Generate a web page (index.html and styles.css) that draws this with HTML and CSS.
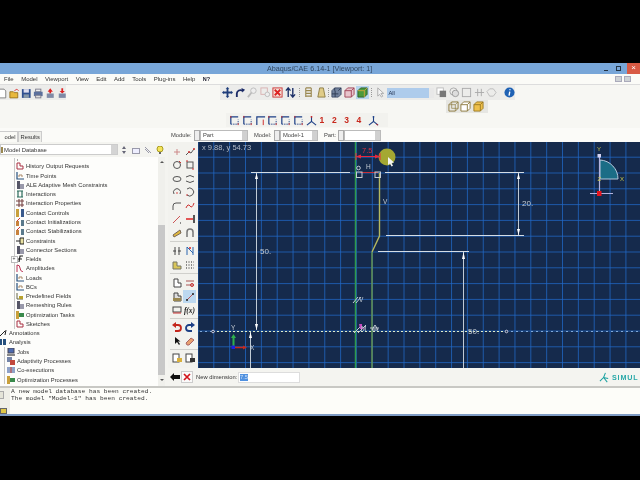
FILE: index.html
```html
<!DOCTYPE html>
<html lang="en">
<head>
<meta charset="utf-8">
<title>Abaqus/CAE</title>
<link rel="stylesheet" href="styles.css">
</head>
<body>
<div class="app">
  <header class="titlebar">
    <span class="title">Abaqus/CAE 6.14-1 [Viewport: 1]</span>
    <div class="winctl">
      <span class="wmin"></span><span class="wmax"></span><span class="wclose">×</span>
    </div>
  </header>
  <nav class="menubar">
    <span>File</span><span>Model</span><span>Viewport</span><span>View</span><span>Edit</span><span>Add</span><span>Tools</span><span>Plug-ins</span><span>Help</span><b>N?</b>
    <div class="mdi"><i></i><i></i></div>
  </nav>
  <section class="toolrows">
    <div class="tools-left">
      <div class="tl-inner">
      <svg class="ic" viewBox="0 0 12 12"><path d="M2 1h6l2 2v8H2z" fill="#fff" stroke="#777"/></svg>
      <svg class="ic" viewBox="0 0 12 12"><path d="M1 4h4l1 1h4v6H1z" fill="#e8b83c" stroke="#96701c"/><path d="M6 3l3-2 2 2" fill="none" stroke="#d33"/></svg>
      <svg class="ic" viewBox="0 0 12 12"><rect x="1" y="1" width="10" height="10" fill="#2f4f8f"/><rect x="3" y="1" width="6" height="4" fill="#dde"/><rect x="3" y="7" width="6" height="4" fill="#89a"/></svg>
      <svg class="ic" viewBox="0 0 12 12"><rect x="3" y="1" width="6" height="3" fill="#eee" stroke="#778"/><rect x="1" y="4" width="10" height="5" fill="#5a6f9c"/><rect x="3" y="8" width="6" height="3" fill="#ddd" stroke="#778"/></svg>
      <svg class="ic" viewBox="0 0 12 12"><path d="M6 0l3 4H7v2H5V4H3z" fill="#d22"/><rect x="2" y="6" width="8" height="5" fill="#7f8aa6"/></svg>
      <svg class="ic" viewBox="0 0 12 12"><path d="M6 6l3-3H7V0H5v3H3z" fill="#d22"/><rect x="2" y="6" width="8" height="5" fill="#7f8aa6"/></svg>
      </div>
    </div>
    <div class="tools-center">
      <div class="tb tb1">
        <svg class="ic" viewBox="0 0 12 12"><path d="M6 0l2 2H7v3h3V4l2 2-2 2V7H7v3h1l-2 2-2-2h1V7H2v1L0 6l2-2v1h3V2H4z" fill="#1f3d7a"/></svg>
        <svg class="ic" viewBox="0 0 12 12"><path d="M2 11V7a4 4 0 0 1 6-3" fill="none" stroke="#1b2a66" stroke-width="2"/><path d="M7 1l4 2-3 3z" fill="#1b2a66"/></svg>
        <svg class="ic" viewBox="0 0 12 12"><circle cx="7" cy="4" r="3" fill="#eee" stroke="#bbb"/><path d="M5 6l-4 5" stroke="#bbb" stroke-width="2"/></svg>
        <svg class="ic" viewBox="0 0 12 12"><rect x="1" y="1" width="7" height="7" fill="none" stroke="#d9b0b0"/><circle cx="8" cy="8" r="2.5" fill="#eee" stroke="#bbb"/></svg>
        <svg class="ic" viewBox="0 0 12 12"><rect x="1" y="1" width="10" height="10" fill="#f4e0d8" stroke="#c33"/><path d="M3 3l6 6M9 3l-6 6" stroke="#d22" stroke-width="2"/></svg>
        <svg class="ic" viewBox="0 0 12 12"><path d="M3.500 11V2M1 4l2.500-3L6 4M8.500 1v9M6 8l2.500 3L11 8" fill="none" stroke="#1c3068" stroke-width="1.500"/></svg>
        <span class="dots"></span>
        <svg class="ic" viewBox="0 0 12 12"><path d="M3 1h6M3 4h6M3 7h6M3 10h6M3 1v10M9 1v10" fill="none" stroke="#9a8850" stroke-width="1.200"/></svg>
        <svg class="ic" viewBox="0 0 12 12"><path d="M4 1h4l2 10H2z" fill="#e0cc88" stroke="#8c7d45"/></svg>
        <span class="dots thin"></span>
        <svg class="ic" viewBox="0 0 12 12"><path d="M1 4l3-3h7v7l-3 3H1z" fill="#71819c" stroke="#3f4d68"/><path d="M1 7.500h7M4.500 4v7M4 1v3M8 4l3-3" stroke="#2e3a52" fill="none"/></svg>
        <svg class="ic" viewBox="0 0 12 12"><path d="M1 4l3-3h7v7l-3 3H1z" fill="#e8c4cc" stroke="#a04458"/><path d="M1 4h7v7M8 4l3-3" stroke="#a04458" fill="none"/></svg>
        <span class="sel"><svg class="ic" viewBox="0 0 12 12"><path d="M1 4l3-3h7v7l-3 3H1z" fill="#4c9a3c" stroke="#2d5f28"/><path d="M1 4h7v7M8 4l3-3" stroke="#c9a63c" fill="none"/></svg></span>
        <span class="dots"></span>
        <svg class="ic" viewBox="0 0 12 12"><path d="M3 1v9l2-2 2 3 1.500-1-2-3h3z" fill="#f4f4f4" stroke="#aaa"/></svg>
        <span class="filter"><span>All</span><i></i></span>
        <svg class="ic" viewBox="0 0 12 12"><rect x="1" y="1" width="7" height="7" fill="#fff" stroke="#bbb"/><rect x="4" y="4" width="7" height="7" fill="#777"/></svg>
        <svg class="ic" viewBox="0 0 12 12"><circle cx="5" cy="5" r="4" fill="none" stroke="#aaa"/><circle cx="7" cy="7" r="3.500" fill="#ddd" stroke="#999"/></svg>
        <svg class="ic" viewBox="0 0 12 12"><rect x="1.500" y="1.500" width="9" height="9" fill="none" stroke="#aaa"/></svg>
        <svg class="ic" viewBox="0 0 12 12"><path d="M1 6h10M4 2v8M8 2v8" stroke="#aaa" fill="none"/></svg>
        <svg class="ic" viewBox="0 0 12 12"><path d="M1 5l3-3h4l3 4-3 4H4z" fill="none" stroke="#bbb"/></svg>
        <svg class="ic info" viewBox="0 0 12 12"><circle cx="6" cy="6" r="5.500" fill="#1f62b4"/><path d="M6.500 2.500v1M6.300 5L5.500 9.500" stroke="#fff" stroke-width="1.500"/></svg>
      </div>
      <div class="tb tb2">
        <svg class="ic" viewBox="0 0 12 12"><path d="M1 4l3-3h7v7l-3 3H1z" fill="none" stroke="#8c7a3c"/><path d="M1 4h7v7M8 4l3-3M4 1v7h7" fill="none" stroke="#8c7a3c" stroke-width=".7"/></svg>
        <svg class="ic" viewBox="0 0 12 12"><path d="M1 4l3-3h7v7l-3 3H1z" fill="#fff" stroke="#8c7a3c"/><path d="M1 4h7v7M8 4l3-3" fill="none" stroke="#8c7a3c"/></svg>
        <svg class="ic" viewBox="0 0 12 12"><path d="M1 4l3-3h7v7l-3 3H1z" fill="#eec04c" stroke="#9b7a22"/><path d="M1 4h7v7M8 4l3-3" fill="none" stroke="#9b7a22"/></svg>
      </div>
      <div class="tb tb3">
        <svg class="ic" viewBox="0 0 12 12"><use href="#view"/></svg>
        <svg class="ic" viewBox="0 0 12 12"><use href="#view"/></svg>
        <svg class="ic" viewBox="0 0 12 12"><path d="M2 11V2h9" fill="none" stroke="#1c3f86" stroke-width="1.300"/><path d="M9 5v6" stroke="#c22"/></svg>
        <svg class="ic" viewBox="0 0 12 12"><use href="#view"/></svg>
        <svg class="ic" viewBox="0 0 12 12"><use href="#view"/></svg>
        <svg class="ic" viewBox="0 0 12 12"><use href="#view"/></svg>
        <svg class="ic" viewBox="0 0 12 12"><path d="M6 2v5L1 11M6 7l5 4" fill="none" stroke="#1c3f86" stroke-width="1.200"/><circle cx="6" cy="2" r="1" fill="#c22"/></svg>
        <span class="nums"><span>1</span><span>2</span><span>3</span><span>4</span></span>
        <svg class="ic" viewBox="0 0 12 12"><path d="M6 2v5L1 11M6 7l5 4" fill="none" stroke="#1c3f86" stroke-width="1.200"/><circle cx="6" cy="2" r="1" fill="#1c3f86"/><path d="M9 10l2 1" stroke="#c22"/></svg>
      </div>
    </div>
  </section>
  <section class="tabsrow">
    <div class="tabs"><span class="tab on">odel</span><span class="tab">Results</span></div>
    <div class="ctx">
      <label class="l1">Module:</label><span class="spin"></span><span class="combo c1">Part</span>
      <label class="l2">Model:</label><span class="spin"></span><span class="combo c2">Model-1</span>
      <label class="l3">Part:</label><span class="spin"></span><span class="combo c3"></span>
    </div>
  </section>
  <main class="main">
    <aside class="left">
      <div class="treehead">
        <span class="treecombo"><svg class="tic" viewBox="0 0 2 8"><rect x="0" y="1" width="2" height="6" fill="#9a8850"/></svg>Model Database<i></i></span>
        <div class="treetools">
          <svg class="ic8" viewBox="0 0 8 8"><path d="M4 0l2 3H2zM4 8l2-3H2z" fill="#667"/></svg>
          <svg class="ic8" viewBox="0 0 8 8"><rect x=".5" y="2.500" width="7" height="5" fill="#eef" stroke="#99a"/></svg>
          <svg class="ic8" viewBox="0 0 8 8"><path d="M1 1l6 6M1 3l4 4" stroke="#99a"/></svg>
          <svg class="ic8" viewBox="0 0 8 8"><circle cx="4" cy="3" r="3" fill="#f4e45a" stroke="#a99b22"/><rect x="3" y="6" width="2" height="2" fill="#666"/></svg>
        </div>
      </div>
      <div class="treebody">
        <ul class="tree">
          <li class="cut l2"><svg class="ti" viewBox="0 0 8 8"><use href="#t1"/></svg>Field Output Requests</li>
          <li class="l2"><svg class="ti" viewBox="0 0 8 8"><use href="#t2"/></svg>History Output Requests</li>
          <li class="l2"><svg class="ti" viewBox="0 0 8 8"><use href="#t3"/></svg>Time Points</li>
          <li class="l2"><svg class="ti" viewBox="0 0 8 8"><use href="#t4"/></svg>ALE Adaptive Mesh Constraints</li>
          <li class="l2"><svg class="ti" viewBox="0 0 8 8"><use href="#t5"/></svg>Interactions</li>
          <li class="l2"><svg class="ti" viewBox="0 0 8 8"><use href="#t6"/></svg>Interaction Properties</li>
          <li class="l2"><svg class="ti" viewBox="0 0 8 8"><use href="#t7"/></svg>Contact Controls</li>
          <li class="l2"><svg class="ti" viewBox="0 0 8 8"><use href="#t8"/></svg>Contact Initializations</li>
          <li class="l2"><svg class="ti" viewBox="0 0 8 8"><use href="#t8"/></svg>Contact Stabilizations</li>
          <li class="l2"><svg class="ti" viewBox="0 0 8 8"><use href="#t9"/></svg>Constraints</li>
          <li class="l2"><svg class="ti" viewBox="0 0 8 8"><use href="#t4"/></svg>Connector Sections</li>
          <li class="l2 plus"><svg class="ti" viewBox="0 0 8 8"><path d="M3 7l1-6h3M2 4h4" fill="none" stroke="#222" stroke-width="1.200"/></svg>Fields</li>
          <li class="l2"><svg class="ti" viewBox="0 0 8 8"><path d="M1 8V1q3 0 3 3t3 4" fill="none" stroke="#b35"/></svg>Amplitudes</li>
          <li class="l2"><svg class="ti" viewBox="0 0 8 8"><use href="#t3"/></svg>Loads</li>
          <li class="l2"><svg class="ti" viewBox="0 0 8 8"><use href="#t3"/></svg>BCs</li>
          <li class="l2"><svg class="ti" viewBox="0 0 8 8"><path d="M1 1v6h6" fill="none" stroke="#664"/><rect x="3" y="4" width="4" height="3" fill="#b8a22c"/></svg>Predefined Fields</li>
          <li class="l2"><svg class="ti" viewBox="0 0 8 8"><use href="#t4"/></svg>Remeshing Rules</li>
          <li class="l2"><svg class="ti" viewBox="0 0 8 8"><use href="#t10"/></svg>Optimization Tasks</li>
          <li class="l2"><svg class="ti" viewBox="0 0 8 8"><use href="#t2"/></svg>Sketches</li>
          <li class="l0"><svg class="ti" viewBox="0 0 8 8"><path d="M1 7l5-5M6 6l1-5" stroke="#222"/></svg>Annotations</li>
          <li class="l0"><svg class="ti" viewBox="0 0 8 8"><rect x="0" y="1" width="3" height="6" fill="#26507e"/><rect x="4" y="1" width="3" height="6" fill="#26507e"/></svg>Analysis</li>
          <li class="l1"><svg class="ti" viewBox="0 0 8 8"><rect x="1" y="0" width="6" height="5" fill="#4c6ab0" stroke="#445"/><rect x="0" y="6" width="8" height="2" fill="#888"/></svg>Jobs</li>
          <li class="l1"><svg class="ti" viewBox="0 0 8 8"><rect x="0" y="0" width="5" height="5" fill="#7585a8"/><rect x="3" y="3" width="5" height="5" fill="#c2483c"/></svg>Adaptivity Processes</li>
          <li class="l1"><svg class="ti" viewBox="0 0 8 8"><rect x="0" y="1" width="8" height="6" fill="#8fa2c8"/><path d="M4 1v6" stroke="#c43"/></svg>Co-executions</li>
          <li class="l1"><svg class="ti" viewBox="0 0 8 8"><use href="#t10"/></svg>Optimization Processes</li>
        </ul>
        <div class="vscroll"><span class="arrow up"></span><span class="thumb"></span><span class="arrow down"></span></div>
      </div>
    </aside>
    <div class="right">
    <div class="upper">
    <div class="toolbox">
      <div class="tgrp g1">
        <svg class="tbi" viewBox="0 0 10 10"><path d="M5 2v6M2 5h6" stroke="#c88"/></svg>
        <svg class="tbi" viewBox="0 0 10 10"><path d="M1 8l3-3 2 1 3-4" fill="none" stroke="#555"/><circle cx="4" cy="5" r="1" fill="#c33"/><circle cx="9" cy="2" r="1" fill="#c33"/></svg>
        <svg class="tbi" viewBox="0 0 10 10"><circle cx="5" cy="5" r="3.500" fill="none" stroke="#555"/><path d="M7 1l2 2" stroke="#c33"/></svg>
        <svg class="tbi" viewBox="0 0 10 10"><rect x="2" y="2" width="6" height="6" fill="none" stroke="#555"/><path d="M1 1h2M7 9h2" stroke="#c33"/></svg>
        <svg class="tbi" viewBox="0 0 10 10"><ellipse cx="5" cy="5" rx="4" ry="2.500" fill="none" stroke="#555"/></svg>
        <svg class="tbi" viewBox="0 0 10 10"><path d="M1 3q4-3 8 0M1 7q4 3 8 0" fill="none" stroke="#555"/></svg>
        <svg class="tbi" viewBox="0 0 10 10"><path d="M2 7a3.500 3.500 0 1 1 6 0" fill="none" stroke="#555"/><circle cx="5" cy="6" r=".8" fill="#c33"/></svg>
        <svg class="tbi" viewBox="0 0 10 10"><path d="M2 2a4 4 0 1 1 0 6" fill="none" stroke="#555"/><circle cx="2" cy="8" r=".8" fill="#c33"/></svg>
        <svg class="tbi" viewBox="0 0 10 10"><path d="M1 9V5q0-3 3-3h5" fill="none" stroke="#555"/></svg>
        <svg class="tbi" viewBox="0 0 10 10"><path d="M1 7q2-5 4-2t4-3" fill="none" stroke="#c33"/></svg>
        <svg class="tbi" viewBox="0 0 10 10"><path d="M1 9l7-7" stroke="#c55"/><path d="M8 9h1" stroke="#222"/></svg>
        <svg class="tbi" viewBox="0 0 10 10"><path d="M1 5h7" stroke="#d22" stroke-width="1.500"/><path d="M9 1v8" stroke="#222" stroke-width="1.500"/></svg>
        <svg class="tbi" viewBox="0 0 10 10"><path d="M1 7l7-5 1 3-7 4z" fill="#e0b83c" stroke="#765"/></svg>
        <svg class="tbi" viewBox="0 0 10 10"><path d="M2 9V4q0-3 3-3t3 3v5" fill="none" stroke="#777" stroke-width="1.500"/></svg>
      </div>
      <div class="tgrp g2">
        <svg class="tbi" viewBox="0 0 10 10"><path d="M1 5h3M6 5h3M3 1v8M7 1v8" stroke="#444"/></svg>
        <svg class="tbi" viewBox="0 0 10 10"><path d="M2 9V1l6 6M8 1v8" fill="none" stroke="#2a67b0"/><circle cx="5" cy="2" r="1" fill="#d22"/></svg>
        <svg class="tbi" viewBox="0 0 10 10"><path d="M1 9h8V6H5V2H1z" fill="#d9c65a" stroke="#776"/></svg>
        <svg class="tbi" viewBox="0 0 10 10"><path d="M1 2h8M1 5h8M1 8h8" stroke="#222" stroke-dasharray="1 1.500"/></svg>
      </div>
      <div class="tgrp g3">
        <svg class="tbi" viewBox="0 0 10 10"><path d="M2 1h4v4h3v4H2z" fill="#fff" stroke="#444"/></svg>
        <svg class="tbi" viewBox="0 0 10 10"><path d="M1 3h8M1 7h8" stroke="#a55"/><circle cx="7" cy="7" r="1.500" fill="none" stroke="#c33"/></svg>
        <svg class="tbi" viewBox="0 0 10 10"><path d="M2 1h4v3h3v5H2z" fill="#ddd" stroke="#444"/><rect x="1" y="6" width="8" height="3" fill="#9a8850"/></svg>
        <span class="tsel"><svg class="tbi" viewBox="0 0 10 10"><path d="M2 8l6-6" stroke="#b55"/><circle cx="2" cy="8" r="1" fill="#222"/><circle cx="8" cy="2" r="1" fill="#222"/></svg></span>
        <svg class="tbi" viewBox="0 0 10 10"><rect x="1" y="2" width="8" height="5" fill="none" stroke="#444"/><path d="M1 8h8" stroke="#c33"/></svg>
        <span class="fx">f(x)</span>
      </div>
      <div class="tgrp g4">
        <svg class="tbi" viewBox="0 0 10 10"><path d="M3 3h3a2.500 2.500 0 0 1 0 6H3" fill="none" stroke="#c4261c" stroke-width="1.800"/><path d="M4 0v6L0 3z" fill="#c4261c"/></svg>
        <svg class="tbi" viewBox="0 0 10 10"><path d="M7 3H4a2.500 2.500 0 0 0 0 6h3" fill="none" stroke="#1c3f86" stroke-width="1.800"/><path d="M6 0v6l4-3z" fill="#1c3f86"/></svg>
        <svg class="tbi" viewBox="0 0 10 10"><path d="M3 1v7l2-2 2 3 1-1-2-2.500h2.500z" fill="#111"/></svg>
        <svg class="tbi" viewBox="0 0 10 10"><path d="M1 7l5-5 3 2-5 5H2z" fill="#e8a070" stroke="#a66"/></svg>
      </div>
      <div class="tgrp g5">
        <svg class="tbi" viewBox="0 0 10 10"><rect x="1" y="1" width="6" height="8" fill="#fff" stroke="#444"/><rect x="5" y="5" width="5" height="4" fill="#d9b03c"/></svg>
        <svg class="tbi" viewBox="0 0 10 10"><rect x="1" y="1" width="6" height="8" fill="#fff" stroke="#444"/><rect x="5" y="5" width="5" height="4" fill="#333"/></svg>
      </div>
    </div>
    <div class="viewport">
      <svg class="sketch" viewBox="198 142 442 226" preserveAspectRatio="none">
        <defs>
          <pattern id="grid" x="197.460" y="140.900" width="15.85" height="15.800" patternUnits="userSpaceOnUse">
            <path d="M0 0V15.800M0 0H15.850" fill="none" stroke="#1f68c8" stroke-width="1.500"/>
          </pattern>
        </defs>
        <rect x="198" y="142" width="442" height="226" fill="#152a4c"/>
        <rect x="198" y="142" width="442" height="226" fill="url(#grid)"/>
        <text x="202" y="150" class="coord">x 9.88, y 54.73</text>
        <g fill="none" stroke="#d4dce4">
          <path d="M251 172.500H350M385 172.500H524M386 235.500H524M378 251.500H469"/>
          <path d="M256.500 172V330M518.500 172V235M463.500 252V368M250.500 332V368" stroke-width=".9"/>
        </g>
        <g fill="#fff">
          <path d="M256.500 173l-1.500 6h3zM256.500 330l-1.500-6h3zM518.500 173l-1.500 6h3zM518.500 235l-1.500-6h3zM463.500 252l-1.500 7h3zM250.500 332l-1.500 6h3z"/>
        </g>
        <text x="260" y="254" class="dim">50.</text>
        <text x="522" y="206" class="dim">20.</text>
        <path d="M200 331.500H213M506 331.500H640" stroke="#7fa8d8" stroke-dasharray="2 3" fill="none"/>
        <path d="M213 331.500H506" stroke="#e0ecc8" stroke-dasharray="2 2" fill="none"/>
        <circle cx="213" cy="331.500" r="1.300" fill="#152a4c" stroke="#ccd"/>
        <circle cx="506.500" cy="331.500" r="1.300" fill="#152a4c" stroke="#ccd"/>
        <text x="468" y="334" class="dim">50.</text>
        <path d="M355.500 142V368" stroke="#2f9a4c" stroke-width="1.500" fill="none"/>
        <path d="M372 252V368" stroke="#6a9a50" stroke-width="1.400" fill="none"/>
        <path d="M379.500 173V236L372 252" stroke="#b4b860" stroke-width="1.400" fill="none"/>
        <path d="M360 172.500H378" stroke="#c83038" fill="none"/>
        <rect x="356.500" y="172" width="5.500" height="5.500" fill="none" stroke="#c4ccd4"/>
        <rect x="375" y="172" width="5.500" height="5.500" fill="none" stroke="#c4ccd4"/>
        <circle cx="358.500" cy="168" r="1.800" fill="none" stroke="#c4ccd4"/>
        <text x="366" y="169" class="sm">H</text>
        <text x="383" y="204" class="sm">V</text>
        <circle cx="387" cy="157" r="8.500" fill="#a4a832"/>
        <path d="M356 156.500H380M356 153v7M380 153v7" stroke="#e8283c" fill="none"/>
        <path d="M356 156.500l5-2v4zM380 156.500l-5-2v4z" fill="#e8283c"/>
        <text x="362" y="153" class="red">7.5</text>
        <path d="M388 157v8l2-1.500 1.500 3 1.500-.8-1.500-2.700 2.500-.5z" fill="#f4f4f4"/>
        <path d="M353 303l5-6M356 303l5-6" stroke="#c4ccd4" fill="none"/>
        <text x="359" y="302" class="sm">V</text>
        <path d="M354 333l8-8M358 333l8-8" stroke="#c4ccd4" fill="none"/>
        <path d="M359 324h3v3l2 2h-4z" fill="#c84cc0"/>
        <text x="361" y="331" class="sm">M</text>
        <path d="M372 330l3-5 3 5zM370 328h9" fill="none" stroke="#c4ccd4"/>
        <text x="231" y="330" class="sm">Y</text>
        <text x="250" y="350" class="sm">X</text>
        <path d="M233.500 347V336" stroke="#2eb04c" stroke-width="2" fill="none"/>
        <path d="M233.500 334l-2.500 4h5z" fill="#2eb04c"/>
        <path d="M235 347.500H244" stroke="#c8281c" stroke-width="1.500" fill="none"/>
        <path d="M247 347.500l-4-2v4z" fill="#c8281c"/>
        <rect x="231.500" y="345.500" width="3.500" height="3.500" fill="#1c22e0"/>
        <text x="597" y="151" class="yel">Y</text>
        <path d="M600 160a19 19 0 0 1 18 19H600z" fill="#1b6d86" stroke="#b4c8dc"/>
        <path d="M599.500 155V193M590 193.500H613" stroke="#b4b4e0" stroke-width="1.200" fill="none"/>
        <rect x="597.500" y="154" width="3.500" height="3.500" fill="#d4d4f4"/>
        <rect x="597" y="191" width="4.500" height="5" fill="#e8141c"/>
        <text x="620" y="181" class="yel">X</text>
        <text x="597.500" y="181" class="yel">Z</text>
      </svg>
    </div>
    </div>
    <section class="prompt">
      <svg class="pi" viewBox="0 0 10 10"><path d="M0 5l4-4v2h6v4H4v2z" fill="#111"/></svg>
      <span class="pbtn"><svg class="pi" viewBox="0 0 10 10"><path d="M2 2l6 6M8 2l-6 6" stroke="#d2141c" stroke-width="1.700"/></svg></span>
      <label class="plabel">New dimension:</label>
      <span class="pinput"><span class="hl">7.5</span></span>
      <div class="simulia">
        <svg class="slogo" viewBox="0 0 12 12"><path d="M7 1l-2 5 4 5M1 10l4-4 5 1" fill="none" stroke="#18a0a0" stroke-width="1.100"/></svg>
        <span>SIMUL</span>
      </div>
    </section>
    </div>
  </main>
  <section class="msg">
    <div class="msgside"><span class="mb1"></span><span class="mb2"></span></div>
    <pre class="msgtext">A new model database has been created.
The model "Model-1" has been created.</pre>
  </section>
</div>
<svg class="sprites" aria-hidden="true">
  <symbol id="view" viewBox="0 0 12 12"><path d="M2 10V2h8" fill="none" stroke="#1c3f86" stroke-width="1.300"/><path d="M2 10h8V5" fill="none" stroke="#1c3f86" stroke-dasharray="1.500 1" /><path d="M2 1v2M10 9v2" stroke="#c22"/></symbol>
  <symbol id="t1" viewBox="0 0 8 8"><path d="M1 2h6M1 6h6" stroke="#555"/></symbol>
  <symbol id="t2" viewBox="0 0 8 8"><path d="M1 1v6h6V4H4V1z" fill="none" stroke="#a34"/></symbol>
  <symbol id="t3" viewBox="0 0 8 8"><path d="M1 0v7h7" fill="none" stroke="#26507e" stroke-width="1.200"/><path d="M3 5V3h3v2" fill="none" stroke="#a86"/></symbol>
  <symbol id="t4" viewBox="0 0 8 8"><rect x="1" y="0" width="3" height="8" fill="#556"/><rect x="4" y="3" width="4" height="5" fill="#99a"/></symbol>
  <symbol id="t5" viewBox="0 0 8 8"><path d="M1 1h6M1 7h6M2 1v6M6 1v6" fill="none" stroke="#2a6a5a" stroke-width="1.200"/></symbol>
  <symbol id="t6" viewBox="0 0 8 8"><path d="M0 2h8M0 6h8M3 0v8M6 0v8" fill="none" stroke="#744" stroke-width="1.100"/></symbol>
  <symbol id="t7" viewBox="0 0 8 8"><rect x="0" y="0" width="3" height="8" fill="#c9a03c"/><rect x="5" y="0" width="3" height="8" fill="#3a5a8c"/></symbol>
  <symbol id="t8" viewBox="0 0 8 8"><rect x="0" y="3" width="3" height="5" fill="#c8823c"/><rect x="5" y="2" width="3" height="6" fill="#5a7a8c"/><path d="M1 3l3-3" stroke="#c33"/></symbol>
  <symbol id="t9" viewBox="0 0 8 8"><path d="M0 4h4M4 1h4v6H4z" fill="#e8e0a0" stroke="#222"/></symbol>
  <symbol id="t10" viewBox="0 0 8 8"><rect x="0" y="0" width="3" height="8" fill="#c9a03c"/><rect x="3" y="2" width="5" height="4" fill="#3a8a4c"/></symbol>
</svg>
</body>
</html>
```

FILE: styles.css
```css
* { box-sizing: border-box; }
html, body { margin: 0; padding: 0; width: 640px; height: 480px; overflow: hidden; background: #000; }
body { font-family: "Liberation Sans", Arial, sans-serif; font-size: 5.8px; color: #333; padding-top: 63px; }
svg { display: block; flex: none; }
.app { width: 640px; height: 353px; display: flex; flex-direction: column; background: #f2f2ee; filter: blur(0.35px); overflow: hidden; }

.titlebar { height: 11px; background: #78a6d8; display: flex; align-items: center; justify-content: flex-end; position: relative; }
.title { position: absolute; left: 267px; top: 1px; font-size: 7.200px; color: #30465f; white-space: nowrap; }
.winctl { display: flex; align-items: center; height: 11px; }
.wmin { width: 4px; height: 1px; background: #234; margin-right: 8px; margin-top: 4px; }
.wmax { width: 5px; height: 5px; border: 1px solid #234; margin-right: 6px; }
.wclose { width: 13px; height: 11px; background: #d85a44; color: #fff; text-align: center; font-size: 8px; line-height: 10px; }

.menubar { height: 11px; background: #fbfbf7; display: flex; align-items: center; gap: 7.500px; padding-left: 4px; font-size: 6px; color: #333; border-bottom: 1px solid #ddd; }
.menubar b { font-size: 5.500px; color: #223; }
.mdi { margin-left: auto; display: flex; gap: 2px; padding-right: 9px; }
.mdi i { width: 7px; height: 6px; background: #cfd3d6; border: 1px solid #aab; }

.toolrows { height: 43px; display: flex; background: #f7f7f3; flex: none; }
.ic { width: 11px; height: 11px; }
.tools-left { width: 220px; flex: none; }
.tl-inner { display: flex; gap: 1.500px; height: 15px; width: 69px; padding: 1px 0 0 0; margin-left: -3px; align-items: center; background: #ececea; }
.tl-inner .ic { width: 10.500px; }
.tools-center { display: flex; flex-direction: column; width: 300px; position: relative; }
.tb { display: flex; align-items: center; }
.tb1 { height: 15px; gap: 1.600px; padding-left: 2px; background: #ececea; width: 295px; }
.tb1 .dots { width: 1px; height: 9px; margin: 0 1.500px; border-left: 1px dotted #999; }
.tb1 .dots.thin { margin: 0 .500px 0 0; }
.sel { background: #b7d5ee; display: flex; padding: 1px; margin: -1px; }
.filter { width: 50px; height: 10px; background: #aeccec; color: #1f2f4f; font-size: 5.800px; line-height: 10px; padding-left: 1px; position: relative; margin-right: 5px; }
.filter i { position: absolute; right: -5px; top: 0; width: 5px; height: 10px; background: #e8e8e8; }
.info { margin-left: 5px; }
.tb2 { height: 13px; width: 42px; background: #e6e6e2; margin-left: 225.500px; gap: 1.500px; padding-left: 2px; }
.tb3 { height: 14px; width: 162px; margin-left: 6px; gap: 1.800px; padding-left: 3px; background: #f2f2ee; }
.nums { display: flex; gap: 7.600px; color: #c8281c; font-weight: bold; font-size: 8.500px; margin-left: 1px; margin-right: 5px; }

.tabsrow { height: 14px; flex: none; display: flex; background: #fbfbf8; }
.tabs { width: 171px; display: flex; align-items: flex-end; }
.tab { height: 11px; padding: 1px 1.500px 0; border: 1px solid #ccc; border-bottom: 0; background: #eeeeea; font-size: 5.800px; line-height: 9px; color: #333; }
.tab.on { width: 18px; background: #fafaf6; border-left: 0; text-align: right; }
.ctx { display: flex; align-items: center; font-size: 5.800px; color: #444; }
.ctx label { margin-right: 2px; }
.l1 { width: 21px; }
.l2.l2 { width: 18px; }
.l3 { width: 12px; }
.spin { width: 6px; height: 11px; background: #eee; border: 1px solid #aaa; }
.combo { height: 11px; background: #fff; border: 1px solid #bbb; position: relative; padding-left: 2px; line-height: 9px; }
.combo::after { content: ""; position: absolute; right: 0; top: 0; width: 5px; height: 9px; background: #d0d0d0; }
.c1 { width: 48px; margin-right: 6px; }
.c2 { width: 38px; margin-right: 6px; }
.c3 { width: 37px; }

.main { display: flex; height: 244px; flex: none; }
.left { width: 168px; display: flex; flex-direction: column; background: #f4f4f0; flex: none; }
.treehead { height: 15px; display: flex; align-items: center; flex: none; }
.treecombo { width: 118px; height: 11px; background: #fff; border: 1px solid #ccc; display: flex; align-items: center; gap: 1px; position: relative; font-size: 5.900px; color: #333; }
.treecombo i { position: absolute; right: 0; top: 0; width: 6px; height: 9px; background: #d4d4d4; }
.tic { width: 2px; height: 8px; }
.treetools { display: flex; gap: 4px; margin-left: 2px; }
.ic8 { width: 8px; height: 8px; }
.treebody { flex: 1; position: relative; background: #fdfdfb; display: flex; overflow: hidden; margin-right: 3px; }
.tree { list-style: none; margin: 1px 0 0; padding: 0; flex: 1; }
.tree li { height: 9.280px; display: flex; align-items: center; gap: 2px; white-space: nowrap; font-size: 5.800px; color: #333; position: relative; }
.ti { width: 8px; height: 8px; }
.tree li.l2 { padding-left: 16px; background: linear-gradient(#c8c8c8, #c8c8c8) 13.500px 0 / 1px 100% no-repeat; }
.tree li.l1 { padding-left: 7px; background: linear-gradient(#c8c8c8, #c8c8c8) 4px 0 / 1px 100% no-repeat; }
.tree li.l0 { padding-left: 0; margin-left: -1px; }
.tree li.cut { height: 3.800px; overflow: hidden; align-items: flex-end; line-height: 5px; }
.tree li.plus::before { content: "+"; position: absolute; left: 10.500px; top: 2px; width: 5px; height: 5px; border: 1px solid #bbb; background: #fff; font-size: 5px; line-height: 3px; text-align: center; }
.vscroll { width: 7px; background: #f0f0ec; position: relative; flex: none; }
.thumb { position: absolute; left: 0; top: 68px; bottom: 11px; width: 7px; background: #c8c8c8; }
.arrow { position: absolute; left: 1.500px; width: 0; height: 0; border-left: 2px solid transparent; border-right: 2px solid transparent; }
.arrow.up { top: 4px; border-bottom: 2px solid #555; }
.arrow.down { bottom: 5px; border-top: 2px solid #555; }

.right { flex: 1; display: flex; flex-direction: column; min-width: 0; }
.upper { display: flex; height: 226px; flex: none; }
.toolbox { width: 30px; display: flex; flex-direction: column; padding: 3px 0 0 2px; background: #f2f2ee; flex: none; }
.tgrp { display: grid; grid-template-columns: 13px 13px; grid-auto-rows: 13.500px; place-items: center; border-bottom: 1px solid #d0d0cc; padding-bottom: 1px; margin-bottom: 3px; }
.tgrp.g3, .tgrp.g4 { margin-bottom: 1.500px; }
.tgrp:last-child { border-bottom: 0; }
.tbi { width: 10px; height: 10px; }
.tsel { background: #bcd8f0; width: 13px; height: 13px; display: flex; align-items: center; justify-content: center; }
.fx { font-family: "Liberation Serif", serif; font-style: italic; font-weight: bold; font-size: 7.500px; color: #222; }

.viewport { width: 442px; height: 226px; flex: none; }
.sketch { width: 442px; height: 226px; }
.coord { font-size: 7.500px; fill: #b4bcc8; font-family: "Liberation Sans", sans-serif; }
.dim { font-size: 8px; fill: #c4ccd4; font-family: "Liberation Sans", sans-serif; }
.sm { font-size: 6.500px; fill: #c4ccd4; font-family: "Liberation Sans", sans-serif; }
.red { font-size: 7.500px; fill: #d83040; font-family: "Liberation Sans", sans-serif; }
.yel { font-size: 6px; fill: #c4c44c; font-family: "Liberation Sans", sans-serif; }

.prompt { height: 18px; flex: none; display: flex; align-items: center; background: #f4f4f0; padding-left: 2px; }
.pi { width: 10px; height: 10px; }
.pbtn { margin-left: 1px; border: 1px solid #ccc; background: #fafafa; display: flex; }
.plabel { margin-left: 3px; font-size: 5.800px; color: #333; width: 42px; white-space: nowrap; }
.pinput { width: 62px; height: 11px; background: #fff; border: 1px solid #ddd; padding: 1px; display: flex; }
.hl { background: #4f90e0; color: #cfe0f4; width: 8px; font-size: 5.800px; line-height: 7px; }
.simulia { margin-left: auto; display: flex; align-items: center; gap: 2px; color: #28a8a8; font-weight: bold; font-size: 7.200px; letter-spacing: .8px; width: 41px; white-space: nowrap; }
.slogo { width: 11px; height: 11px; }

.msg { flex: 1; display: flex; background: #fdfdf9; border-top: 2px solid #c8c8c4; border-bottom: 2px solid #7f9cc4; }
.msgside { width: 10px; background: #efefe8; display: flex; flex-direction: column; padding-top: 3px; justify-content: space-between; }
.mb1 { width: 4px; height: 8px; background: #e4e4d8; border: 1px solid #aaa; border-left: 0; }
.mb2 { width: 7px; height: 6px; background: #e0c848; border: 1px solid #666; }
.msgtext { margin: 0; padding: 1px 0 0 1px; font-family: "Liberation Mono", monospace; font-size: 6.200px; line-height: 6.500px; color: #333; }
.sprites { position: absolute; width: 0; height: 0; }
```
